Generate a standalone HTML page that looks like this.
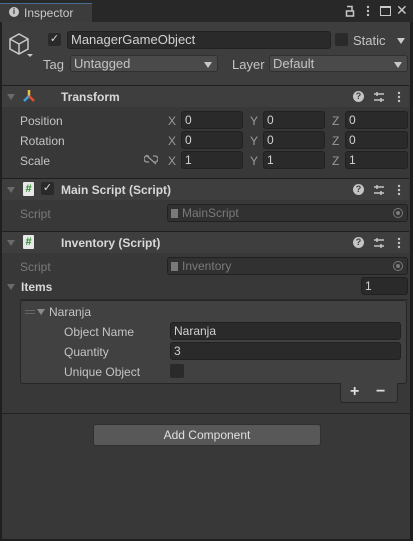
<!DOCTYPE html><html><head><style>
*{box-sizing:border-box;margin:0;padding:0}
body{width:413px;height:541px;background:#1f1f1f;font-family:"Liberation Sans",sans-serif;font-size:12px;color:#c4c4c4;position:relative;overflow:hidden}
.a{position:absolute}
.f{position:absolute;background:#2a2a2a;border:1px solid #212121;border-radius:3px;height:18px;padding-left:3px;line-height:16px;color:#d2d2d2}
.hd{position:absolute;left:2px;width:407px;height:20px;background:#3e3e3e;border-top:1px solid #1f1f1f}
.b{font-weight:bold;color:#d8d8d8}
.lbl{position:absolute;left:20px}
.tri{position:absolute;width:0;height:0;border-left:4px solid transparent;border-right:4px solid transparent;border-top:6px solid #8a8a8a}
.dim{color:#7a7a7a}
.xyz{position:absolute;color:#9a9a9a}
.hs{position:absolute;left:74px;width:11px;height:14px;background:#e8e8e8;border-radius:1px;color:#2a8a2a;font-size:11px;font-weight:bold;line-height:14px;text-align:center}
.ic{position:absolute;color:#c4c4c4;font-size:12px}
</style></head><body>
<svg width="0" height="0" style="position:absolute"><defs>
<symbol id="sl" viewBox="0 0 12 12"><path d="M1 3H11M1 9H11" stroke="#c4c4c4" stroke-width="1.5"/><path d="M4 1V5M8 7V11" stroke="#c4c4c4" stroke-width="1.5"/></symbol>
<symbol id="dt" viewBox="0 0 4 12"><circle cx="2" cy="2" r="1.2" fill="#c4c4c4"/><circle cx="2" cy="6" r="1.2" fill="#c4c4c4"/><circle cx="2" cy="10" r="1.2" fill="#c4c4c4"/></symbol>
</defs></svg>
<div class="a" style="left:2px;top:22px;width:408px;height:517px;background:#383838"></div>
<div class="a" style="left:0;top:0;width:413px;height:22px;background:#282828"></div>
<div class="a" style="left:0;top:3px;width:92px;height:19px;background:#3c3c3c;border-top:1px solid #4a6d93"></div>
<div class="a" style="left:9px;top:7px;width:10px;height:10px;border-radius:50%;background:#c8c8c8;color:#333;font-size:8px;font-weight:bold;text-align:center;line-height:10px">i</div>
<div class="a" style="left:24px;top:6px;font-size:12px;color:#c8c8c8">Inspector</div>
<svg class="a" style="left:345px;top:5px" width="10" height="12"><path d="M2 1.5H7V6" fill="none" stroke="#c8c8c8" stroke-width="1.5"/><rect x="1.5" y="6" width="7" height="5" fill="none" stroke="#c8c8c8" stroke-width="1.5"/></svg>
<svg class="a" style="left:366px;top:5px" width="4" height="12"><use href="#dt"/></svg>
<div class="a" style="left:380px;top:6px;width:11px;height:10px;border:1px solid #c8c8c8;border-top-width:2px"></div>
<div class="a" style="left:396px;top:2px;color:#c8c8c8;font-size:14px">✕</div>
<div class="a" style="left:2px;top:22px;width:408px;height:63px;background:#3e3e3e"></div>
<svg class="a" style="left:8px;top:32px" width="26" height="28" viewBox="0 0 26 28"><path d="M11 2 L20 7 L20 17 L11 22 L2 17 L2 7 Z M2 7 L11 12 L20 7 M11 12 L11 22" fill="none" stroke="#c8c8c8" stroke-width="1.5"/><path d="M19 22 h6 l-3 3z" fill="#c8c8c8"/></svg>
<div class="a" style="left:48px;top:33px;width:13px;height:13px;background:#2a2a2a;border-radius:2px;color:#ddd;font-size:11px;line-height:13px;text-align:center">✓</div>
<div class="f" style="left:67px;top:31px;width:264px;font-size:13px">ManagerGameObject</div>
<div class="a" style="left:335px;top:33px;width:13px;height:13px;background:#2a2a2a;border-radius:2px"></div>
<div class="a" style="left:353px;top:33px;font-size:13px">Static</div>
<div class="tri" style="left:397px;top:38px;border-top-color:#c8c8c8"></div>
<div class="a" style="left:43px;top:57px;font-size:13px">Tag</div>
<div class="a" style="left:70px;top:55px;width:148px;height:17px;background:#4a4a4a;border:1px solid #303030;border-radius:3px;padding-left:3px;font-size:13px;line-height:15px">Untagged</div>
<div class="tri" style="left:204px;top:62px;border-top-color:#c8c8c8"></div>
<div class="a" style="left:232px;top:57px;font-size:13px">Layer</div>
<div class="a" style="left:269px;top:55px;width:139px;height:17px;background:#4a4a4a;border:1px solid #303030;border-radius:3px;padding-left:3px;font-size:13px;line-height:15px">Default</div>
<div class="tri" style="left:394px;top:62px;border-top-color:#c8c8c8"></div>
<div class="hd" style="top:85px;height:22px"></div>
<div class="tri" style="left:7px;top:94px;border-top-color:#6a6a6a"></div>
<svg class="a" style="left:22px;top:89px" width="14" height="14"><path d="M7 1 L7 7" stroke="#f0c040" stroke-width="2.5"/><path d="M7 7 L2 12" stroke="#40a0e0" stroke-width="2.5"/><path d="M7 7 L12 12" stroke="#e05030" stroke-width="2.5"/></svg>
<div class="a b" style="left:61px;top:90px">Transform</div>
<div class="a" style="left:353px;top:91px;width:11px;height:11px;border-radius:50%;background:#c4c4c4;color:#3e3e3e;font-size:9px;font-weight:bold;text-align:center;line-height:11px">?</div>
<svg class="a" style="left:373px;top:91px" width="12" height="12"><use href="#sl"/></svg>
<svg class="a" style="left:397px;top:91px" width="4" height="12"><use href="#dt"/></svg>
<div class="lbl" style="top:114px">Position</div>
<div class="lbl" style="top:134px">Rotation</div>
<div class="lbl" style="top:154px">Scale</div>
<svg class="a" style="left:144px;top:154px" width="14" height="11"><path d="M5 2H3a3 3 0 0 0 0 6h2M9 2h2a3 3 0 0 1 0 6H9M2 1L12 10" fill="none" stroke="#9a9a9a" stroke-width="1.3"/></svg>
<div class="xyz" style="left:168px;top:114px">X</div><div class="f" style="left:181px;top:111px;width:62px">0</div>
<div class="xyz" style="left:250px;top:114px">Y</div><div class="f" style="left:263px;top:111px;width:62px">0</div>
<div class="xyz" style="left:332px;top:114px">Z</div><div class="f" style="left:345px;top:111px;width:63px">0</div>
<div class="xyz" style="left:168px;top:134px">X</div><div class="f" style="left:181px;top:131px;width:62px">0</div>
<div class="xyz" style="left:250px;top:134px">Y</div><div class="f" style="left:263px;top:131px;width:62px">0</div>
<div class="xyz" style="left:332px;top:134px">Z</div><div class="f" style="left:345px;top:131px;width:63px">0</div>
<div class="xyz" style="left:168px;top:154px">X</div><div class="f" style="left:181px;top:151px;width:62px">1</div>
<div class="xyz" style="left:250px;top:154px">Y</div><div class="f" style="left:263px;top:151px;width:62px">1</div>
<div class="xyz" style="left:332px;top:154px">Z</div><div class="f" style="left:345px;top:151px;width:63px">1</div>
<div class="hd" style="top:178px;height:22px"></div>
<div class="tri" style="left:7px;top:187px;border-top-color:#6a6a6a"></div>
<div class="hs" style="left:23px;top:182px">#</div>
<div class="a" style="left:41px;top:182px;width:13px;height:13px;background:#2a2a2a;border-radius:2px;color:#ddd;font-size:11px;line-height:13px;text-align:center">✓</div>
<div class="a b" style="left:61px;top:183px">Main Script (Script)</div>
<div class="a" style="left:353px;top:184px;width:11px;height:11px;border-radius:50%;background:#c4c4c4;color:#3e3e3e;font-size:9px;font-weight:bold;text-align:center;line-height:11px">?</div>
<svg class="a" style="left:373px;top:184px" width="12" height="12"><use href="#sl"/></svg>
<svg class="a" style="left:397px;top:184px" width="4" height="12"><use href="#dt"/></svg>
<div class="lbl dim" style="top:207px">Script</div>
<div class="f dim" style="left:167px;top:204px;width:241px;background:#313131;padding-left:14px;color:#7a7a7a">MainScript</div>
<div class="a" style="left:171px;top:209px;width:7px;height:9px;background:#7a7a7a"></div>
<div class="a" style="left:393px;top:208px;width:10px;height:10px;border:1.5px solid #7a7a7a;border-radius:50%"></div>
<div class="a" style="left:396px;top:211px;width:4px;height:4px;background:#7a7a7a;border-radius:50%"></div>
<div class="hd" style="top:231px;height:22px"></div>
<div class="tri" style="left:7px;top:240px;border-top-color:#6a6a6a"></div>
<div class="hs" style="left:23px;top:235px">#</div>
<div class="a b" style="left:61px;top:236px">Inventory (Script)</div>
<div class="a" style="left:353px;top:237px;width:11px;height:11px;border-radius:50%;background:#c4c4c4;color:#3e3e3e;font-size:9px;font-weight:bold;text-align:center;line-height:11px">?</div>
<svg class="a" style="left:373px;top:237px" width="12" height="12"><use href="#sl"/></svg>
<svg class="a" style="left:397px;top:237px" width="4" height="12"><use href="#dt"/></svg>
<div class="lbl dim" style="top:260px">Script</div>
<div class="f dim" style="left:167px;top:257px;width:241px;background:#313131;padding-left:14px;color:#7a7a7a">Inventory</div>
<div class="a" style="left:171px;top:262px;width:7px;height:9px;background:#7a7a7a"></div>
<div class="a" style="left:393px;top:261px;width:10px;height:10px;border:1.5px solid #7a7a7a;border-radius:50%"></div>
<div class="a" style="left:396px;top:264px;width:4px;height:4px;background:#7a7a7a;border-radius:50%"></div>
<div class="tri" style="left:7px;top:284px;border-top-color:#6a6a6a"></div>
<div class="a b" style="left:21px;top:280px">Items</div>
<div class="f" style="left:361px;top:277px;width:47px">1</div>
<div class="a" style="left:20px;top:299px;width:388px;height:1px;background:#2a2a2a"></div>
<div class="a" style="left:20px;top:300px;width:387px;height:84px;background:#414141;border:1px solid #262626;border-radius:3px"></div>
<div class="a" style="left:25px;top:310px;width:10px;height:1px;background:#666"></div>
<div class="a" style="left:25px;top:313px;width:10px;height:1px;background:#666"></div>
<div class="tri" style="left:37px;top:309px"></div>
<div class="a" style="left:49px;top:305px">Naranja</div>
<div class="a" style="left:64px;top:325px">Object Name</div>
<div class="f" style="left:170px;top:322px;width:231px">Naranja</div>
<div class="a" style="left:64px;top:345px">Quantity</div>
<div class="f" style="left:170px;top:342px;width:231px">3</div>
<div class="a" style="left:64px;top:365px">Unique Object</div>
<div class="a" style="left:170px;top:364px;width:14px;height:14px;background:#2a2a2a;border-radius:2px"></div>
<div class="a" style="left:340px;top:383px;width:58px;height:20px;background:#414141;border:1px solid #262626;border-top:none;border-radius:0 0 3px 3px"></div>
<div class="a" style="left:350px;top:383px;font-size:16px;font-weight:bold;color:#ddd">+</div>
<div class="a" style="left:376px;top:383px;font-size:16px;font-weight:bold;color:#ddd">−</div>
<div class="a" style="left:2px;top:413px;width:408px;height:1px;background:#232323"></div>
<div class="a" style="left:93px;top:424px;width:228px;height:22px;background:#585858;border:1px solid #303030;border-radius:3px;text-align:center;line-height:20px;color:#e0e0e0">Add Component</div>
</body></html>
